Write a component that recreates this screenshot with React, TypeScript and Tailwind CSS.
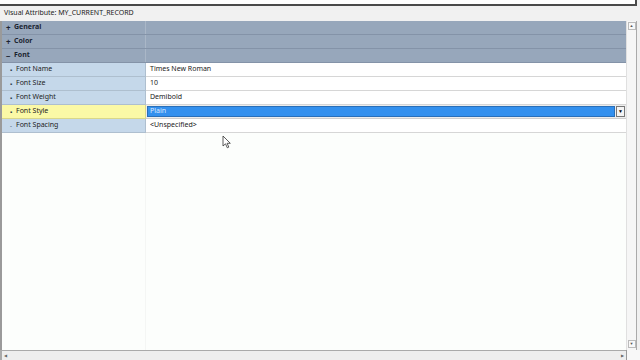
import React from "react";

const Cat = ({ label, open }: { label: string; open?: boolean }) => (
  <div className="flex h-[14px] bg-[#97a7bb] border-b border-[#8493a8]">
    <div className="w-[144px] flex items-center pl-[4px] border-r border-[#aab7c7] font-bold text-[#1a2430]">
      <span className="w-[8px] text-[8px] leading-none">{open ? "−" : "+"}</span>
      <span>{label}</span>
    </div>
    <div className="flex-1" />
  </div>
);

const Prop = ({
  label,
  value,
  selected,
  bullet = "▪",
}: {
  label: string;
  value: string;
  selected?: boolean;
  bullet?: string;
}) => (
  <div className="flex h-[14px]">
    <div
      className={
        "w-[144px] flex items-center pl-[8px] border-b border-r " +
        (selected ? "bg-[#fbf9a6] border-[#d9d78a]" : "bg-[#c5d8ea] border-[#aebfcf]")
      }
    >
      <span className="w-[6px] text-[6px] leading-none text-[#2a3a4a]">{bullet}</span>
      <span>{label}</span>
    </div>
    {selected ? (
      <div className="flex-1 flex items-center bg-[#ededed] border-b border-[#cfcfcf] pl-[1px]">
        <div className="flex-1 h-[11px] bg-[#3390ee] flex items-center pl-[2px] text-[#dbe9ff] border border-[#2a6fb8]">
          Plain
        </div>
        <div className="w-[9px] h-[11px] mx-[1px] bg-[#f4f4f4] border border-[#777] flex items-center justify-center">
          <span className="text-[5px] leading-none text-black">▼</span>
        </div>
      </div>
    ) : (
      <div className="flex-1 flex items-center bg-white border-b border-[#d6d6d6] pl-[4px]">
        {value}
      </div>
    )}
  </div>
);

export default function App() {
  return (
    <div
      className="w-[640px] h-[360px] bg-[#f0f0f0] overflow-hidden relative text-[7px] text-[#222]"
      style={{ fontFamily: '"Noto Sans", "Open Sans", sans-serif' }}
    >
      <div className="h-[6px] w-[637px] bg-white border-b-2 border-r-2 border-[#4a4a4a]" />
      <div className="h-[15px] flex items-center pl-[4px] text-[#222] bg-[#f1f1f1]">
        Visual Attribute: MY_CURRENT_RECORD
      </div>
      <div className="flex h-[329px]">
        <div className="w-[626px] bg-[#fcfefc] border-l-2 border-[#9a9a9a] flex flex-col">
          <Cat label="General" />
          <Cat label="Color" />
          <Cat label="Font" open />
          <Prop label="Font Name" value="Times New Roman" />
          <Prop label="Font Size" value="10" />
          <Prop label="Font Weight" value="Demibold" />
          <Prop label="Font Style" value="Plain" selected />
          <Prop label="Font Spacing" value="<Unspecified>" bullet="-" />
          <div className="flex-1 flex">
            <div className="w-[144px] border-r border-[#f4f6f4]" />
            <div className="flex-1" />
          </div>
        </div>
        <div className="w-[10px] bg-[#f6f6f6] border-l border-[#e0e0e0] flex flex-col justify-between items-center pt-[1px] pb-[2px]">
          <div className="w-[8px] h-[8px] bg-[#f8f8f8] border border-[#bbb] flex items-center justify-center">
            <span className="text-[4px] leading-none text-[#555]">▲</span>
          </div>
          <div className="w-[8px] h-[8px] bg-[#f8f8f8] border border-[#bbb] flex items-center justify-center">
            <span className="text-[4px] leading-none text-[#555]">▼</span>
          </div>
        </div>
        <div className="flex-1 bg-[#f0f0f0] border-l border-[#aaa]" />
      </div>
      <div className="h-[10px] flex">
        <div className="w-[626px] bg-[#eeeeee] border-l-2 border-t border-[#aaaaaa] flex items-center justify-between px-[2px]">
          <span className="text-[4px] leading-none text-[#666]">◀</span>
          <span className="text-[4px] leading-none text-[#666]">▶</span>
        </div>
        <div className="flex-1 bg-[#f8f8f8] border-l border-[#999]" />
      </div>
      <svg className="absolute left-[222px] top-[135px]" width="10" height="14" viewBox="0 0 10 14">
        <path d="M1 1 L1 11 L3.5 8.8 L5.3 12.8 L6.8 12.1 L5.1 8.3 L8.3 8.3 Z" fill="white" stroke="#333" strokeWidth="0.8" />
      </svg>
    </div>
  );
}
